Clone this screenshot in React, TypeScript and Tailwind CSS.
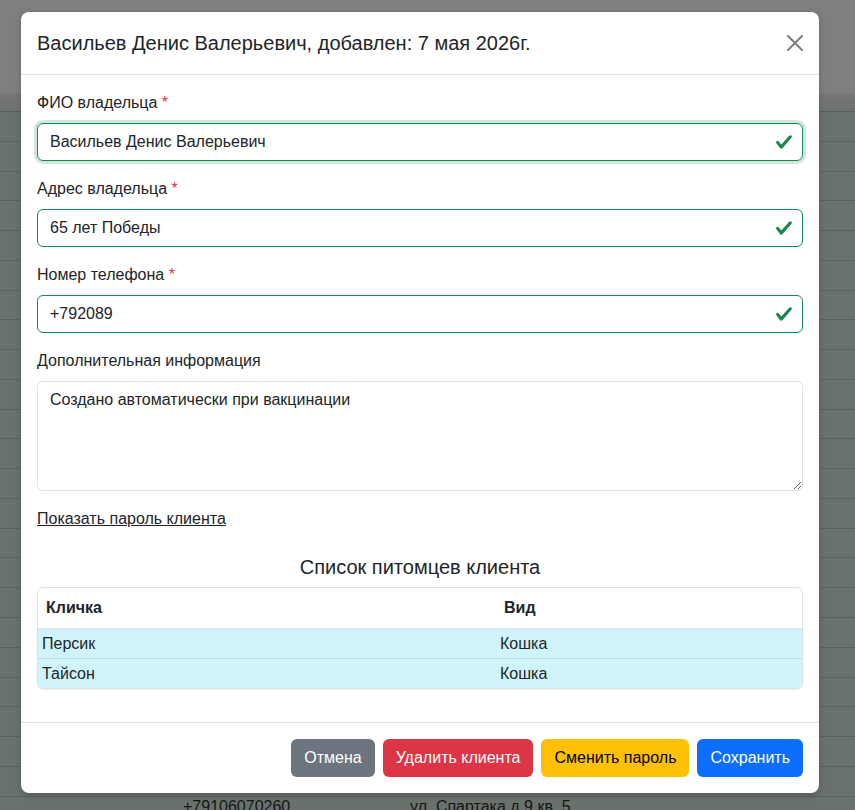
import React from 'react';

const bgRows = Array.from({ length: 25 }, (_, i) => i);

const CheckIcon = () => (
  <svg viewBox="0 0 8 8" className="absolute right-[9px] top-1/2 h-[18px] w-[18px] -translate-y-1/2">
    <path
      fill="#198754"
      d="M2.3 6.73.6 4.53c-.4-1.04.46-1.4 1.1-.8l1.1 1.4 3.4-3.8c.6-.63 1.6-.27 1.2.7l-4 4.6c-.43.5-.8.4-1.1.1z"
    />
  </svg>
);

type FieldProps = {
  label: string;
  value: string;
  focused?: boolean;
};

const ValidField: React.FC<FieldProps> = ({ label, value, focused }) => (
  <div className="mb-4">
    <label className="mb-2 block leading-6 text-[#212529]">
      {label} <span className="text-[#dc3545]">*</span>
    </label>
    <div
      className={
        focused
          ? 'relative flex h-[38px] items-center rounded-md border border-[#198754] px-3 leading-6 text-[#212529] shadow-[0_0_0_3px_rgba(25,135,84,0.2)]'
          : 'relative flex h-[38px] items-center rounded-md border border-[#198754] px-3 leading-6 text-[#212529]'
      }
    >
      {value}
      <CheckIcon />
    </div>
  </div>
);

const pets = [
  { name: 'Персик', kind: 'Кошка' },
  { name: 'Тайсон', kind: 'Кошка' },
];

export default function App() {
  return (
    <div className="relative h-[810px] w-full overflow-hidden bg-[#68716c] font-['Liberation_Sans',Arial,sans-serif] text-[16px]">
      {/* dimmed page behind the modal */}
      <div className="h-[93px] bg-[#7f7f7f]" />
      <div className="h-[18px] bg-gradient-to-b from-[#777777] to-[#6c716e]" />
      {bgRows.map((i) => (
        <div key={i} className="flex h-[29.78px] items-center border-t border-[#5a615d] text-[#141716]">
          {i === 23 && (
            <>
              <span className="w-[410px] pb-[8px] pl-[183px]">+79106070260</span>
              <span className="pb-[8px]">ул. Спартака д.9 кв. 5</span>
            </>
          )}
        </div>
      ))}

      {/* modal */}
      <div className="absolute left-[21px] top-[12px] w-[798px] rounded-lg bg-white shadow-[0_2px_6px_rgba(0,0,0,0.2)]">
        <div className="flex items-center justify-between border-b border-[#dee2e6] p-4">
          <h5 className="text-[20px] leading-[30px] text-[#212529]">
            Васильев Денис Валерьевич, добавлен: 7 мая 2026г.
          </h5>
          <svg viewBox="0 0 16 16" className="h-4 w-4 opacity-50">
            <path
              fill="#000"
              d="M.293.293a1 1 0 0 1 1.414 0L8 6.586 14.293.293a1 1 0 1 1 1.414 1.414L9.414 8l6.293 6.293a1 1 0 0 1-1.414 1.414L8 9.414l-6.293 6.293a1 1 0 0 1-1.414-1.414L6.586 8 .293 1.707a1 1 0 0 1 0-1.414z"
            />
          </svg>
        </div>

        <div className="p-4">
          <ValidField label="ФИО владельца" value="Васильев Денис Валерьевич" focused />
          <ValidField label="Адрес владельца" value="65 лет Победы" />
          <ValidField label="Номер телефона" value="+792089" />

          <div className="mb-4">
            <label className="mb-2 block leading-6 text-[#212529]">Дополнительная информация</label>
            <textarea
              className="block h-[110px] w-full rounded-md border border-[#dee2e6] px-3 py-1.5 leading-6 text-[#212529] outline-none"
              defaultValue="Создано автоматически при вакцинации"
            />
          </div>

          <div className="leading-6">
            <a className="text-[#212529] underline">Показать пароль клиента</a>
          </div>

          <h5 className="mt-6 mb-2 text-center text-[20px] leading-6 text-[#212529]">
            Список питомцев клиента
          </h5>

          <div className="mb-[17px] overflow-hidden rounded-md border border-[#dee2e6] shadow-[0_1px_2px_rgba(0,0,0,0.08)]">
            <div className="flex border-b border-[#dee2e6] font-bold text-[#212529]">
              <div className="w-[458px] px-2 py-2 leading-6">Кличка</div>
              <div className="flex-1 px-2 py-2 leading-6">Вид</div>
            </div>
            {pets.map((p, i) => (
              <div
                key={p.name}
                className={
                  i < pets.length - 1
                    ? 'flex h-[30px] items-center border-b border-[#badce3] bg-[#cff4fc] text-[#212529]'
                    : 'flex h-[29px] items-center bg-[#cff4fc] text-[#212529]'
                }
              >
                <div className="w-[458px] px-1 leading-6">{p.name}</div>
                <div className="flex-1 px-1 leading-6">{p.kind}</div>
              </div>
            ))}
          </div>
        </div>

        <div className="flex justify-end gap-2 border-t border-[#dee2e6] p-4">
          <button className="h-[38px] rounded-md bg-[#6c757d] px-[13px] leading-6 text-white">Отмена</button>
          <button className="h-[38px] rounded-md bg-[#dc3545] px-[13px] leading-6 text-white">Удалить клиента</button>
          <button className="h-[38px] rounded-md bg-[#ffc107] px-[13px] leading-6 text-black">Сменить пароль</button>
          <button className="h-[38px] rounded-md bg-[#0d6efd] px-[13px] leading-6 text-white">Сохранить</button>
        </div>
      </div>
    </div>
  );
}
